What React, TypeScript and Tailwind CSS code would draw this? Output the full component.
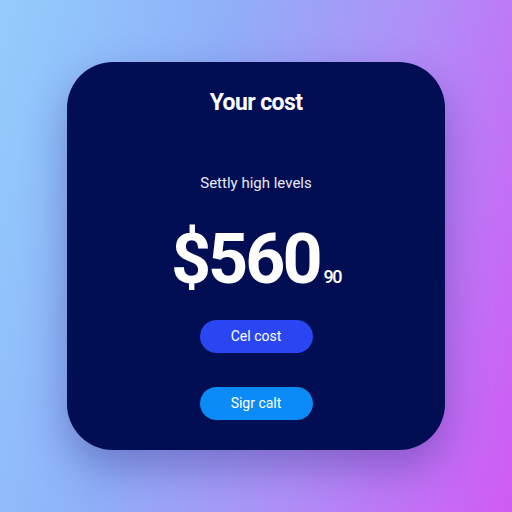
import React from 'react';

const font = { fontFamily: 'Roboto, "Liberation Sans", sans-serif' };

export default function App() {
  return (
    <div
      className="w-[512px] h-[512px] flex items-center justify-center bg-[linear-gradient(105deg,#93cdfd_0%,#8fb0f8_35%,#b08ff8_65%,#d05af5_100%)]"
      style={font}
    >
      <div className="w-[378px] h-[388px] rounded-[46px] bg-[#020e53] shadow-[0_18px_40px_rgba(40,30,120,0.35)] flex flex-col items-center pt-[27px]">
        <h1 className="text-[23px] leading-[28px] font-bold tracking-[-0.6px] text-white">Your cost</h1>

        <p className="mt-[56px] text-[15px] leading-[20px] text-[#e6e9f7]">Settly high levels</p>

        <div className="mt-[31px] flex items-end text-white">
          <span className="text-[70px] leading-none font-bold tracking-[-3px]">$560</span>
          <span className="ml-[4px] mb-[8px] text-[18px] leading-none font-medium tracking-[-1.5px]">90</span>
        </div>

        <button className="mt-[26px] w-[113px] h-[33px] rounded-full bg-[#2a46f2] text-white text-[14px]">
          Cel cost
        </button>
        <button className="mt-[34px] w-[113px] h-[33px] rounded-full bg-[#0a8bf6] text-white text-[14px]">
          Sigr calt
        </button>
      </div>
    </div>
  );
}
